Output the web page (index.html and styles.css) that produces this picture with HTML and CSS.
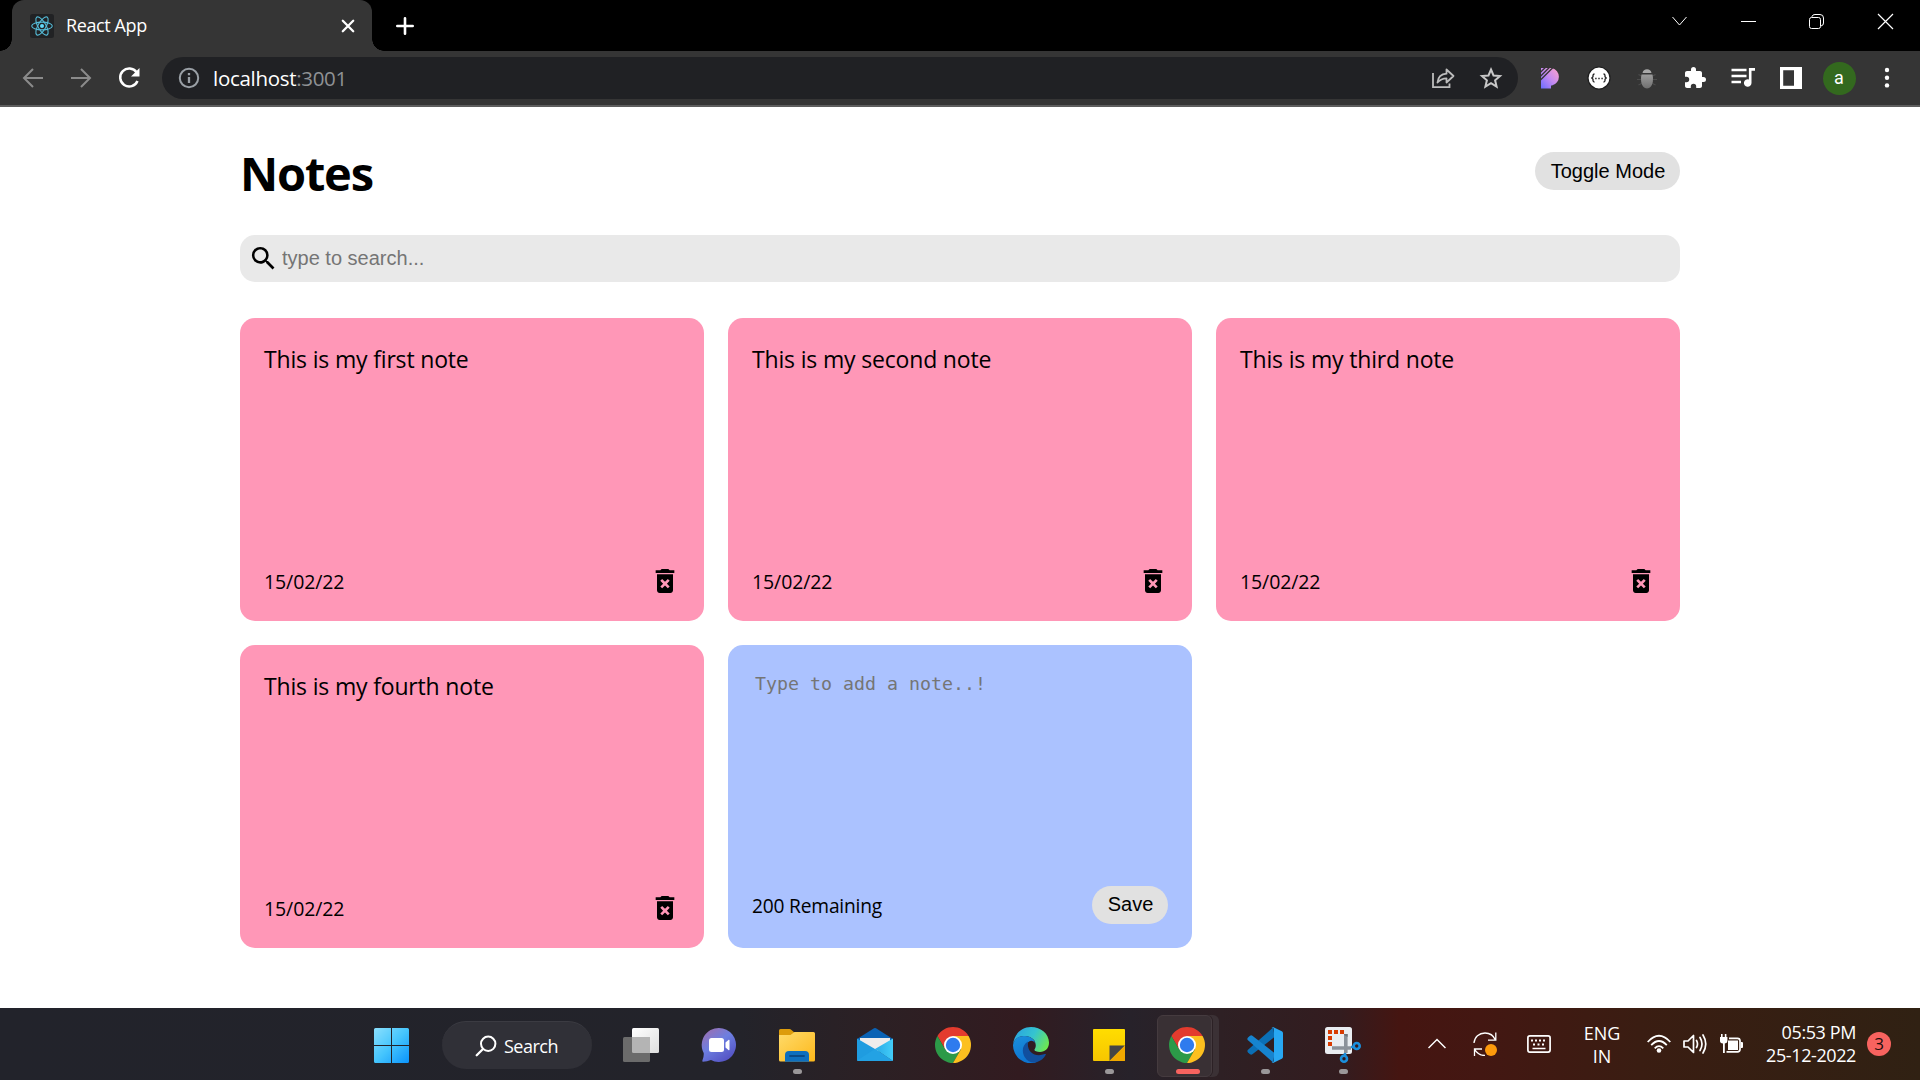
FILE: index.html
```html
<!DOCTYPE html>
<html lang="en">
<head>
<meta charset="utf-8">
<title>React App</title>
<link rel="stylesheet" href="styles.css">
</head>
<body>
<svg class="defs" width="0" height="0">
  <defs>
    <linearGradient id="g-win" x1="0" y1="0" x2="1" y2="1"><stop offset="0" stop-color="#8be0fd"/><stop offset=".5" stop-color="#45c5fd"/><stop offset="1" stop-color="#0a93fb"/></linearGradient>
    <linearGradient id="g-chat" x1="0" y1="0" x2=".7" y2="1"><stop offset="0" stop-color="#a46ca8"/><stop offset=".5" stop-color="#6d7fe0"/><stop offset="1" stop-color="#5452c4"/></linearGradient>
    <linearGradient id="g-folder" x1="0" y1="0" x2="1" y2="1"><stop offset="0" stop-color="#ffdb6b"/><stop offset="1" stop-color="#fdb81b"/></linearGradient>
    <linearGradient id="g-note" x1="0" y1="0" x2="0" y2="1"><stop offset="0" stop-color="#ffdd00"/><stop offset="1" stop-color="#f7c600"/></linearGradient>
    <linearGradient id="g-mail" x1="0" y1="0" x2="1" y2="0"><stop offset="0" stop-color="#28a9e6"/><stop offset="1" stop-color="#43cdf8"/></linearGradient>
    <linearGradient id="g-edge1" x1="0" y1=".3" x2="1" y2=".7"><stop offset="0" stop-color="#2aa5e0"/><stop offset=".5" stop-color="#35c4cf"/><stop offset="1" stop-color="#6fe94d"/></linearGradient>
    <linearGradient id="g-edge2" x1="0" y1="0" x2=".4" y2="1"><stop offset="0" stop-color="#1b8fdc"/><stop offset="1" stop-color="#0d74d0"/></linearGradient>
    <linearGradient id="g-p" x1="1" y1="0" x2="0" y2="1"><stop offset="0" stop-color="#ffa3c7"/><stop offset=".5" stop-color="#c58af0"/><stop offset="1" stop-color="#6a6cff"/></linearGradient>
    <linearGradient id="g-bug" x1="0" y1="0" x2="0" y2="1"><stop offset="0" stop-color="#9c9c9c"/><stop offset="1" stop-color="#6f6f6f"/></linearGradient>
    <linearGradient id="g-task" x1="0" y1="0" x2="1" y2="1"><stop offset="0" stop-color="#ffffff"/><stop offset="1" stop-color="#dedede"/></linearGradient>
    <symbol id="i-chrome" viewBox="0 0 48 48">
      <path fill="#e33b2e" d="M24 12h20.78A24 24 0 0 0 3.22 12L13.6 30z"/>
      <path fill="#2c9a48" d="M13.6 30 3.22 12A24 24 0 0 0 24 48l10.4-18z"/>
      <path fill="#fcc01f" d="M34.4 30 24 48A24 24 0 0 0 44.78 12H24z"/>
      <circle cx="24" cy="24" r="12" fill="#fff"/><circle cx="24" cy="24" r="9.6" fill="#2f7bee"/>
    </symbol>
    <symbol id="i-trash" viewBox="0 0 24 24">
      <path d="M6 19c0 1.1.9 2 2 2h8c1.1 0 2-.9 2-2V7H6v12zm2.46-7.12 1.41-1.41L12 12.59l2.12-2.12 1.41 1.41L13.41 14l2.12 2.12-1.41 1.41L12 15.41l-2.12 2.12-1.41-1.41L10.59 14l-2.13-2.12zM15.5 4l-1-1h-5l-1 1H5v2h14V4z"/>
    </symbol>
  </defs>
</svg>

<header class="browser">
  <div class="tabstrip">
    <div class="tab">
      <svg class="favicon" width="24" height="24" viewBox="0 0 24 24"><rect width="24" height="24" rx="2.5" fill="#212224"/><g fill="none" stroke="#55bcd8" stroke-width="1.1"><ellipse cx="12" cy="12" rx="10.3" ry="3.9"/><ellipse cx="12" cy="12" rx="10.3" ry="3.9" transform="rotate(60 12 12)"/><ellipse cx="12" cy="12" rx="10.3" ry="3.9" transform="rotate(120 12 12)"/></g><circle cx="12" cy="12" r="2" fill="#61dafb"/></svg>
      <span class="tab-title">React App</span>
      <svg class="tab-close" width="14" height="14" viewBox="0 0 14 14"><path d="M1.8 1.8l10.4 10.4M12.2 1.8 1.8 12.2" stroke="#fff" stroke-width="2.3" stroke-linecap="round"/></svg>
    </div>
    <svg class="new-tab" width="18" height="18" viewBox="0 0 18 18"><path d="M9 1.3v15.4M1.3 9h15.4" stroke="#fff" stroke-width="2.6" stroke-linecap="round"/></svg>
    <div class="window-controls">
      <svg width="17" height="17" viewBox="0 0 17 17"><path d="M1.5 4 8.500 12l7-8" fill="none" stroke="#fff"/></svg>
      <svg width="17" height="17" viewBox="0 0 17 17"><path d="M1 8.500h15" stroke="#fff"/></svg>
      <svg width="17" height="17" viewBox="0 0 17 17"><g fill="none" stroke="#fff"><rect x="1.500" y="4.500" width="11" height="11" rx="2"/><path d="M4 4.300V3.500Q4.500 1.500 7 1.500h5q3.500 0 3.500 3.500v5q0 2.500-2.500 3"/></g></svg>
      <svg width="17" height="17" viewBox="0 0 17 17"><path d="M1 1l15 15M16 1 1 16" stroke="#fff" stroke-width="1.200"/></svg>
    </div>
  </div>
  <div class="toolbar">
    <nav class="nav-buttons">
      <svg width="24" height="24" viewBox="0 0 24 24"><path d="M22 12H3M12 3l-9 9 9 9" fill="none" stroke="#8b8b8b" stroke-width="2"/></svg>
      <svg width="24" height="24" viewBox="0 0 24 24"><path d="M2 12h19M12 3l9 9-9 9" fill="none" stroke="#8b8b8b" stroke-width="2"/></svg>
      <svg width="24" height="24" viewBox="0 0 24 24"><path d="M19.600 6.300A9 9 0 1 0 20.500 15" fill="none" stroke="#fff" stroke-width="2.500"/><path d="M22.500 2v8.500H14z" fill="#fff"/></svg>
    </nav>
    <div class="omnibox">
      <svg width="22" height="22" viewBox="0 0 22 22"><circle cx="11" cy="11" r="9.200" fill="none" stroke="#9aa0a6" stroke-width="2"/><path d="M11 10v6M11 6v2.200" stroke="#9aa0a6" stroke-width="2.300"/></svg>
      <span class="url"><span class="host">localhost</span><span class="port">:3001</span></span>
      <svg class="share" width="24" height="24" viewBox="0 0 24 24"><g fill="none" stroke="#bdbdbd" stroke-width="1.800"><path d="M2 7v14.200h16.500V17.500"/><path d="M6.500 16.500c.5-5.500 4-8.500 9-8.800V3.500l7 6.500-7 6.500v-4.200c-4 0-6.500 1.200-9 4.200z" stroke-linejoin="round"/></g></svg>
      <svg width="24" height="24" viewBox="0 0 24 24"><path d="M12 3.500l2.500 6 6.500.5-4.900 4.300 1.500 6.300L12 17.200l-5.600 3.400 1.500-6.300L3 10l6.500-.5z" fill="none" stroke="#c8c8c8" stroke-width="2"/></svg>
    </div>
    <div class="extensions">
      <svg width="22" height="22" viewBox="0 0 22 22"><path fill="url(#g-p)" d="M12 1a9 9 0 0 1 0 17.500H11V21.500H1V1z"/><path d="M.5 5.300 5.300.5M.5 9.300 9.300.5M.5 13 13 .5" stroke="#353535" stroke-width="1.300"/></svg>
      <svg width="24" height="24" viewBox="0 0 24 24"><circle cx="12" cy="12" r="11" fill="#fff" stroke="#1d1d1d" stroke-width="1.200"/><g fill="none" stroke="#222" stroke-width="1.300"><path d="M7.500 8Q6 8 6 9.500v1.300L4.800 12 6 13.200v1.300Q6 16 7.500 16M16.500 8q1.500 0 1.500 1.500v1.300l1.200 1.200-1.200 1.200v1.300q0 1.500-1.500 1.500"/></g><path d="M8.200 12.500h1.400M11.300 12.500h1.400M14.400 12.500h1.400" stroke="#222" stroke-width="1.400"/></svg>
      <svg width="22" height="22" viewBox="0 0 22 22"><path d="M2.500 7.500l4 2M1 12.500h5M2.500 18l4-2M19.500 7.500l-4 2M21 12.500h-5M19.500 18l-4-2" stroke="#4c4c4c" stroke-width="1.200"/><path d="M6.500 6a4.600 4.600 0 0 1 9 0z" fill="#a8a8a8"/><path d="M5.500 7.500h11q1 4 .3 7.500-1.300 6-5.800 6.500-4.500-.5-5.800-6.500-.7-3.500.3-7.500z" fill="url(#g-bug)"/></svg>
      <svg width="24" height="24" viewBox="0 0 24 24"><path fill="#fff" d="M20.500 11H19V7c0-1.100-.9-2-2-2h-4V3.500a2.500 2.500 0 0 0-5 0V5H4c-1.100 0-2 .9-2 2v3.800h1.500a2.700 2.700 0 0 1 0 5.400H2V20c0 1.100.9 2 2 2h3.800v-1.500a2.700 2.700 0 0 1 5.400 0V22H17c1.100 0 2-.9 2-2v-4h1.500a2.500 2.500 0 0 0 0-5z"/></svg>
      <svg width="26" height="22" viewBox="0 0 26 22"><path d="M1.500 3h15M1.500 9h15M1.500 15h9.500" stroke="#fff" stroke-width="2.300"/><path d="M25 1v2.800h-3.500V16a3.800 3.800 0 1 1-2.600-3.600V1z" fill="#fff"/></svg>
      <svg width="22" height="22" viewBox="0 0 22 22"><path fill="#fff" fill-rule="evenodd" d="M0 0h22v22H0zM3.200 3.200v15.600h10.800V3.200z"/></svg>
      <span class="avatar">a</span>
      <svg width="22" height="22" viewBox="0 0 22 22"><g fill="#fff"><circle cx="11" cy="3" r="2.200"/><circle cx="11" cy="10.700" r="2.200"/><circle cx="11" cy="18.400" r="2.200"/></g></svg>
    </div>
  </div>
</header>

<main class="page">
  <div class="container">
    <div class="header">
      <h1>Notes</h1>
      <button class="pill">Toggle Mode</button>
    </div>
    <div class="search">
      <svg width="31" height="31" viewBox="0 0 24 24"><path d="M15.500 14h-.79l-.28-.27A6.471 6.471 0 0 0 16 9.500 6.500 6.500 0 1 0 9.500 16c1.610 0 3.090-.59 4.230-1.570l.27.28v.79l5 4.990L20.490 19l-4.990-5zm-6 0C7.010 14 5 11.990 5 9.500S7.010 5 9.500 5 14 7.010 14 9.500 11.990 14 9.500 14z"/></svg>
      <input type="text" placeholder="type to search...">
    </div>
    <div class="notes-list">
      <article class="note"><span class="note-text">This is my first note</span><div class="note-footer"><small class="date">15/02/22</small><svg width="32" height="32"><use href="#i-trash"/></svg></div></article>
      <article class="note"><span class="note-text">This is my second note</span><div class="note-footer"><small class="date">15/02/22</small><svg width="32" height="32"><use href="#i-trash"/></svg></div></article>
      <article class="note"><span class="note-text">This is my third note</span><div class="note-footer"><small class="date">15/02/22</small><svg width="32" height="32"><use href="#i-trash"/></svg></div></article>
      <article class="note"><span class="note-text">This is my fourth note</span><div class="note-footer"><small class="date">15/02/22</small><svg width="32" height="32"><use href="#i-trash"/></svg></div></article>
      <article class="note new">
        <textarea placeholder="Type to add a note..!"></textarea>
        <div class="note-footer"><small class="remaining">200 Remaining</small><button class="pill save">Save</button></div>
      </article>
    </div>
  </div>
</main>

<footer class="taskbar">
  <div class="start"><svg width="35" height="35" viewBox="0 0 35 35"><path fill="url(#g-win)" d="M1.500 0H17v17H0V1.500Q0 0 1.500 0zM18 0h15.500Q35 0 35 1.500V17H18zM0 18h17v17H1.500Q0 35 0 33.500zM18 18h17v15.500q0 1.500-1.500 1.500H18z"/></svg></div>
  <div class="search-pill">
    <svg width="22" height="22" viewBox="0 0 22 22"><circle cx="13.200" cy="8.800" r="7.200" fill="none" stroke="#fff" stroke-width="2"/><path d="M8 14l-6.300 6.300" stroke="#fff" stroke-width="2.300" stroke-linecap="round"/></svg>
    <span>Search</span>
  </div>
  <div class="apps">
    <div class="app"><svg width="36" height="36" viewBox="0 0 36 36"><rect x="9" y="1" width="27" height="25" rx="1.500" fill="url(#g-task)"/><rect x="0" y="10" width="27" height="25" rx="1.500" fill="#6b6b6b"/><path d="M9 10h18v16H10.500Q9 26 9 24.500z" fill="#b4b4b4"/></svg></div>
    <div class="app"><svg width="36" height="36" viewBox="0 0 36 36"><path fill="url(#g-chat)" d="M18 1a17 17 0 1 1-8 32q-4 1.500-8 1.700-1-.2-.6-1.200Q3 30 2.700 26A17 17 0 0 1 18 1z"/><rect x="8" y="11" width="15" height="14" rx="2.500" fill="#fff"/><path d="M24.500 15.500l3.200-2.700q.8-.3.800.7v9q0 1-.8.700l-3.200-2.700z" fill="#fff"/></svg></div>
    <div class="app running"><svg width="36" height="36" viewBox="0 0 36 36"><path d="M0 3.500Q0 2 1.500 2h9q1 0 2 1l3.500 3v4H0z" fill="#dd9c0c"/><path d="M0 8h11.500l4-3H34.500Q36 5 36 6.500v26.500q0 1.500-1.500 1.500H1.500Q0 34.500 0 33z" fill="url(#g-folder)"/><path d="M6 34.700V28q0-4 4-4h16q4 0 4 4v6.700z" fill="#0e6fbe"/><path d="M11 29h14" stroke="#0a4a86" stroke-width="1.800" stroke-linecap="round"/></svg></div>
    <div class="app"><svg width="36" height="36" viewBox="0 0 36 36"><path d="M0 12 17 1.200q1-.6 2 0L36 12v3H0z" fill="#0a62b4"/><path d="M3 11h30v6L18 27 3 17z" fill="#eeecec"/><path d="M0 11.500 18 22 36 34H1.200Q0 34 0 32.800z" fill="#1f9ce0"/><path d="M36 11.500 18 22l18 12z" fill="url(#g-mail)"/><path d="M0 33.500 18 22l18 12H1z" fill="#23a2e4"/></svg></div>
    <div class="app"><svg width="36" height="36"><use href="#i-chrome"/></svg></div>
    <div class="app"><svg width="36" height="36" viewBox="0 0 36 36"><path fill="url(#g-edge1)" d="M0 17.500C1 7 8.500 0 18 0c10 0 18 7 18 15.500C36 21.500 32 25 27 25c-3.500 0-6-1-5.500-2.500C23.500 20 23 16 21 13 17 8 3 6 0 17.500z"/><path fill="url(#g-edge2)" d="M0 18C1 11 7 8.500 12 9c6 .5 9.500 3.500 10 7-2-3-6-3-7.500.5-3 7 0 15 8.500 19A18 18 0 0 1 0 18z"/><path fill="#114f9e" d="M15 14.500C9 18 8.500 25 12 30.500c2.500 4 7 6 11.500 4.800 4-1.100 7.500-4 9.300-7.500.3-.8-.3-1-1-.7-9 3.500-18.500-1-16.800-12.600z"/></svg></div>
    <div class="app running"><svg width="36" height="36" viewBox="0 0 36 36"><path d="M2 3Q2 2 3 2h30q1 0 1 1v30q0 1-1 1H3q-1 0-1-1z" fill="url(#g-note)"/><path d="M18.500 18.500H34L18.500 34z" fill="#454545"/><path d="M34 18.500V33q0 1-1 1H18.500z" fill="#f0a800"/></svg></div>
    <div class="app active"><svg width="36" height="36"><use href="#i-chrome"/></svg></div>
    <div class="app running"><svg width="36" height="36" viewBox="0 0 36 36"><path fill="#0b6fb5" d="M26.300.3 1 22.700q-1.300 1.300 0 2.700l2 1.800q1.200.9 2.400 0L27.500 10z"/><path fill="#1684cf" d="M26.300 35.700 1 13.300q-1.300-1.300 0-2.700l2-1.800q1.200-.9 2.400 0L27.500 26z"/><path fill="#28a8f3" d="M26.500.2l8.300 4Q36 4.800 36 6.300v23.400q0 1.500-1.200 2.100l-8.300 4q-1.300.3-2-.5 2.500.5 2.500-2V2.700q0-2.500-2.500-2 .7-.8 2-.5z"/></svg></div>
    <div class="app running"><svg class="snip" width="36" height="36" viewBox="0 0 36 36"><rect x="0" y="0" width="27" height="27" rx="2.500" fill="#e9edf1"/><path fill="#d83b01" d="M3 3h4v4H3zM9 3h4v4H9zM15 3h4v4h-4zM3 9h4v4H3zM3 15h4v4H3z"/><path d="M20.800 7v19M7 21h19" stroke="#8b929a" stroke-width="3.600"/><path d="M19 7h3.600v3L19 8z" fill="#6e757c"/><g fill="none" stroke="#1b8fdc" stroke-width="2.600"><circle cx="31.700" cy="19" r="3"/><circle cx="19" cy="31.700" r="3"/><path d="M20 29v-3M29 20h-3"/></g></svg></div>
  </div>
  <div class="tray">
    <svg class="t-chevron" width="18" height="18" viewBox="0 0 18 18"><path d="M.5 13 9 4.500l8.500 8.500" fill="none" stroke="#fff" stroke-width="1.500"/></svg>
    <svg class="t-sync" width="24" height="24" viewBox="0 0 24 24"><g fill="none" stroke="#fff" stroke-width="1.300"><path d="M1 11C1.500 5 6 1 12 1c5 0 8.500 2.500 10.500 7M22.800.5v7.700H15M1.500 24v-7H9M1.500 17C3.500 21 7 23.500 12 23.500"/></g><circle cx="18" cy="18" r="6" fill="#fd9a0c"/></svg>
    <svg class="t-keyboard" width="24" height="18" viewBox="0 0 24 18"><rect x=".9" y=".9" width="22.200" height="16.200" rx="2" fill="none" stroke="#fff" stroke-width="1.700"/><path d="M4 5.500h2M8 5.500h2M12 5.500h2M16 5.500h2M6 9.500h2M10.500 9.500h2M15 9.500h2" stroke="#fff" stroke-width="2"/><path d="M5.500 13.500h13" stroke="#fff" stroke-width="1.500"/></svg>
    <div class="lang"><span>ENG</span><span>IN</span></div>
    <div class="status">
      <svg width="24" height="20" viewBox="0 0 24 20"><g fill="none" stroke="#fff" stroke-width="1.800"><path d="M.7 8Q12-4.500 23.300 8" /><path d="M4.200 11.200Q12 2.800 19.800 11.200"/><path d="M7.700 14.300Q12 10 16.300 14.300"/></g><circle cx="12" cy="16.500" r="2.300" fill="#fff"/></svg>
      <svg width="24" height="22" viewBox="0 0 24 22"><g fill="none" stroke="#fff" stroke-width="1.700" stroke-linejoin="round" stroke-linecap="round"><path d="M1 8h4l5.500-5.500v17L5 14H1z"/><path d="M13.500 7.500q2 3.500 0 7M17 4.500q4 6.500 0 13M20 2q5.500 9 0 18"/></g></svg>
      <svg width="24" height="20" viewBox="0 0 24 20"><path fill="#fff" d="M2 0h1.600v3h2.200V0h1.600v3h1v4q0 2-2.600 2.500V19H4V9.500Q1 9 1 7V3h1z"/><rect x="9" y="6.500" width="10" height="9.500" fill="#fff"/><path d="M10 4.300h8.500q2.500 0 2.500 2.500v8.500q0 2.500-2.500 2.500H7.500" fill="none" stroke="#fff" stroke-width="1.700"/><path d="M22 8h1q1 0 1 1v4q0 1-1 1h-1z" fill="#fff"/></svg>
    </div>
    <div class="clock"><span>05:53 PM</span><span>25-12-2022</span></div>
    <span class="badge">3</span>
  </div>
</footer>
</body>
</html>
```
FILE: styles.css
```css
* { box-sizing: border-box; }
body {
  margin: 0;
  width: 1920px;
  height: 1080px;
  overflow: hidden;
  display: flex;
  flex-direction: column;
  background: #fff;
  font-family: "Open Sans", "Noto Sans", sans-serif;
}
svg { display: block; flex: none; }
.defs { position: absolute; }

/* browser window */
.browser { flex: none; height: 107px; background: #353535; border-bottom: 2px solid #5d5d5d; }
.tabstrip { display: flex; align-items: center; height: 51px; background: #000; padding-left: 12px; }
.tab {
  position: relative;
  display: flex;
  align-items: center;
  width: 360px;
  height: 51px;
  padding: 0 17px 0 18px;
  background: #353535;
  border-radius: 12px 12px 0 0;
}
.tab::before, .tab::after {
  content: "";
  position: absolute;
  bottom: 0;
  width: 12px;
  height: 12px;
}
.tab::before { left: -12px; background: radial-gradient(circle at 0 0, #000 11.5px, #353535 12px); }
.tab::after { right: -12px; background: radial-gradient(circle at 100% 0, #000 11.5px, #353535 12px); }
.tab-title { flex: 1; margin: 0 0 2px 12px; color: #fff; font-size: 18px; line-height: 24px; letter-spacing: -0.4px; }
.new-tab { margin-left: 24px; }
.window-controls { display: flex; margin-left: auto; width: 275px; height: 34px; align-self: flex-start; margin-top: 4px; }
.window-controls svg { margin: auto; }
.toolbar { display: flex; align-items: center; height: 54px; }
.nav-buttons { display: flex; gap: 24px; padding-left: 21px; width: 162px; }
.omnibox {
  display: flex;
  align-items: center;
  width: 1356px;
  height: 42px;
  padding: 0 15px 0 16px;
  border-radius: 21px;
  background: #202124;
}
.url { flex: 1; margin-left: 13px; font-size: 20.5px; line-height: 28px; }
.host { color: #fff; letter-spacing: -0.3px; }
.port { color: #8f9194; letter-spacing: -0.3px; }
.share { margin-right: 24px; }
.extensions { display: grid; grid-template-columns: repeat(8, 48px); align-items: center; justify-items: center; width: 384px; margin-left: 9px; }
.avatar {
  width: 33px;
  height: 33px;
  border-radius: 50%;
  background: #33691e;
  color: #fff;
  font: 18px/31px Roboto, sans-serif;
  text-align: center;
}

/* notes app */
.page { flex: 1; background: #fff; }
.container { width: 1440px; margin: 0 auto; padding-top: 34px; }
.header { display: flex; justify-content: space-between; align-items: flex-start; margin-bottom: 30px; }
h1 { margin: 0; font-size: 47px; line-height: 64px; letter-spacing: -1.2px; }
.pill {
  height: 38px;
  margin: 11px 0 0;
  padding: 0 14px 0 15px;
  width: 145px;
  border: none;
  border-radius: 19px;
  background: #e1e1e1;
  color: #000;
  font: 20px/38px "Liberation Sans", Arial, sans-serif;
  white-space: nowrap;
}
.pill.save { width: 76px; margin: 0; padding-bottom: 2px; line-height: 36px; }
.search {
  display: flex;
  align-items: center;
  height: 47px;
  margin-bottom: 36px;
  padding: 0 8px;
  border-radius: 15px;
  background: #e9e9e9;
}
.search input {
  flex: 1;
  margin: 0 0 2px 3px;
  padding: 0;
  border: none;
  background: none;
  font: 20px/24px "Liberation Sans", Arial, sans-serif;
}
.search input::placeholder, .new textarea::placeholder { color: #757575; opacity: 1; }
.notes-list { display: grid; grid-template-columns: repeat(3, 1fr); grid-auto-rows: 303px; gap: 24px; }
.note {
  display: flex;
  flex-direction: column;
  justify-content: space-between;
  padding: 25px 23px 24px 24px;
  border-radius: 15px;
  background: #ff97b7;
}
.note-text { font-size: 23px; line-height: 32px; letter-spacing: -0.17px; }
.note-footer { display: flex; align-items: center; justify-content: space-between; }
.date { font-size: 19.5px; line-height: 26px; letter-spacing: -0.1px; padding-top: 2px; }
.remaining { font-size: 19.2px; line-height: 26px; letter-spacing: -0.2px; padding-top: 2px; }
.new { background: #abc2ff; padding-top: 23px; padding-right: 24px; }
.new textarea {
  height: 180px;
  padding: 0 3px;
  border: none;
  resize: none;
  background: none;
  font: 18.27px/32px "DejaVu Sans Mono", monospace;
}

/* taskbar */
.taskbar {
  flex: none;
  display: flex;
  align-items: center;
  height: 72px;
  color: #fff;
  background: linear-gradient(90deg, #22232b 0, #23232a 740px, #2c2024 880px, #321b20 1020px, #27222a 1130px, #2e2024 1220px, #331c1f 1340px, #451511 1400px, #431712 1480px, #3a1d12 1640px, #302113 1920px);
}
.start { width: 35px; margin: 2px 0 0 374px; }
.search-pill {
  display: flex;
  align-items: center;
  width: 150px;
  height: 48px;
  margin: 2px 0 0 33px;
  padding-left: 33px;
  border-radius: 24px;
  border-top: 1px solid #3b3b42;
  background: #303037;
  font-size: 18px;
  line-height: 24px;
  letter-spacing: -0.5px;
}
.search-pill span { margin-left: 7px; }
.apps { display: flex; margin-left: 10px; }
.app { position: relative; display: flex; width: 78px; height: 72px; align-items: center; justify-content: center; }
.app svg { position: relative; margin-top: 2px; }
.snip { overflow: visible; }
.running::after, .active::after {
  content: "";
  position: absolute;
  bottom: 6px;
  left: 35px;
  width: 9px;
  height: 5px;
  border-radius: 2.5px;
  background: #9a9799;
}
.active::after { left: 28px; width: 24px; background: #f8635f; }
.active::before {
  content: "";
  position: absolute;
  top: 7px;
  left: 9px;
  width: 53px;
  height: 60px;
  border: 1px solid #453b3f;
  border-radius: 6px;
  background: #393034;
  box-shadow: 1px 0 0 0 #2c2125, 7px 0 0 0 #3b3135;
}
.tray { display: flex; align-items: center; margin-left: 46px; font-size: 18px; line-height: 23px; }
.t-sync { margin-left: 27px; }
.t-keyboard { margin-left: 30px; }
.lang { display: flex; flex-direction: column; align-items: center; width: 36px; margin: 2px 0 0 33px; }
.status { display: flex; gap: 12px; margin: 0 0 1px 27px; align-items: center; }
.clock { display: flex; flex-direction: column; align-items: flex-end; width: 113px; letter-spacing: -0.4px; }
.badge {
  width: 24px;
  height: 24px;
  margin-left: 11px;
  border-radius: 50%;
  background: #f8635f;
  color: #1c0d0d;
  font-size: 17px;
  line-height: 23px;
  text-align: center;
}
```
